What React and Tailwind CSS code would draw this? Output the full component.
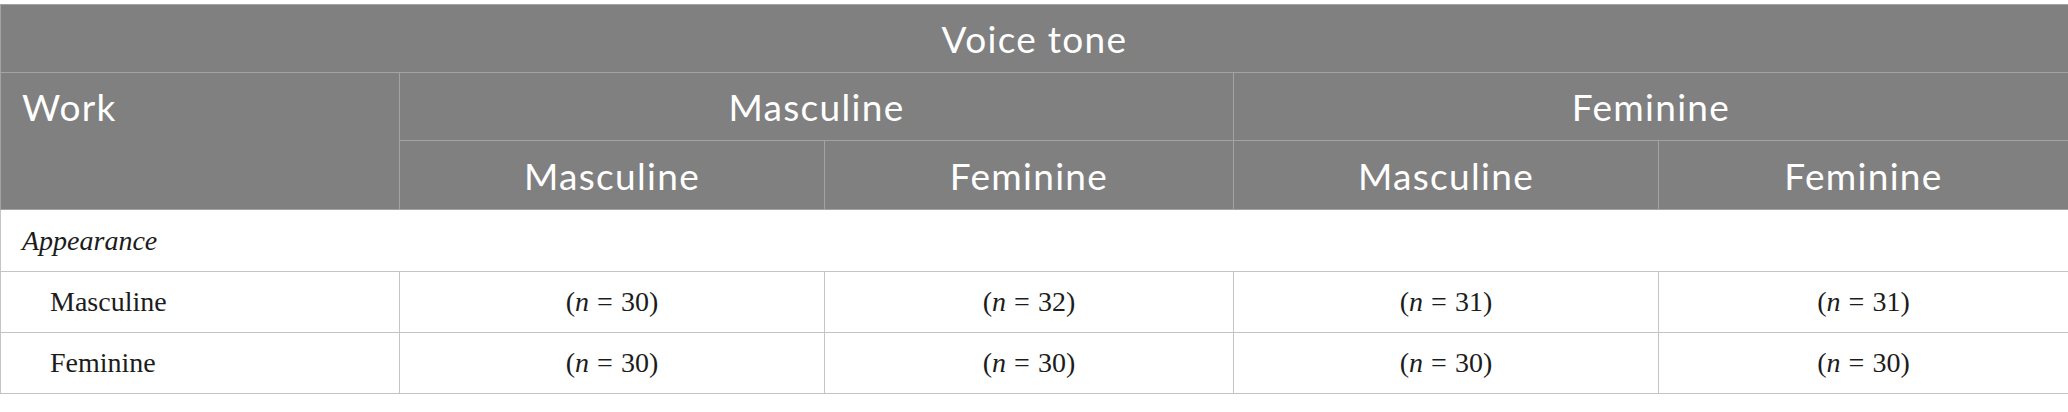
import React from "react";

const head = "border border-[#a3a3a3] bg-[#7f807f] text-white font-normal";
const cell = "border border-[#c4c4c4] text-center";

const rows = [
  { label: "Masculine", values: [30, 32, 31, 31] },
  { label: "Feminine", values: [30, 30, 30, 30] },
];

function N({ v }) {
  return (
    <span>
      (<span className="italic">n</span>
      <span className="px-[8px]">=</span>
      {v})
    </span>
  );
}

export default function App() {
  return (
    <div className="w-[2068px] h-[412px] bg-white pt-[4px]">
      <table
        className="table-fixed border-collapse w-[2068px] text-[37px] leading-none tracking-[1.3px]"
        style={{ fontFamily: "Lato, 'Open Sans', sans-serif" }}
      >
        <colgroup>
          <col className="w-[399px]" />
          <col className="w-[425px]" />
          <col className="w-[409px]" />
          <col className="w-[425px]" />
          <col className="w-[410px]" />
        </colgroup>
        <thead>
          <tr className="h-[68px]">
            <th colSpan={5} className={`${head} text-center`}>
              Voice tone
            </th>
          </tr>
          <tr className="h-[68px]">
            <th rowSpan={2} className={`${head} text-left align-top pl-[21px] pt-[15px]`}>
              Work
            </th>
            <th colSpan={2} className={`${head} text-center`}>
              Masculine
            </th>
            <th colSpan={2} className={`${head} text-center`}>
              Feminine
            </th>
          </tr>
          <tr className="h-[69px]">
            <th className={`${head} text-center`}>Masculine</th>
            <th className={`${head} text-center`}>Feminine</th>
            <th className={`${head} text-center`}>Masculine</th>
            <th className={`${head} text-center`}>Feminine</th>
          </tr>
        </thead>
        <tbody
          className="text-[28px] text-[#1c1c1c] tracking-normal"
          style={{ fontFamily: "'Liberation Serif', 'DejaVu Serif', serif" }}
        >
          <tr className="h-[62px]">
            <td colSpan={5} className="border border-[#c4c4c4] pl-[21px] italic">
              Appearance
            </td>
          </tr>
          {rows.map((r) => (
            <tr key={r.label} className="h-[61px]">
              <td className="border border-[#c4c4c4] pl-[49px]">{r.label}</td>
              {r.values.map((v, i) => (
                <td key={i} className={cell}>
                  <N v={v} />
                </td>
              ))}
            </tr>
          ))}
        </tbody>
      </table>
    </div>
  );
}
